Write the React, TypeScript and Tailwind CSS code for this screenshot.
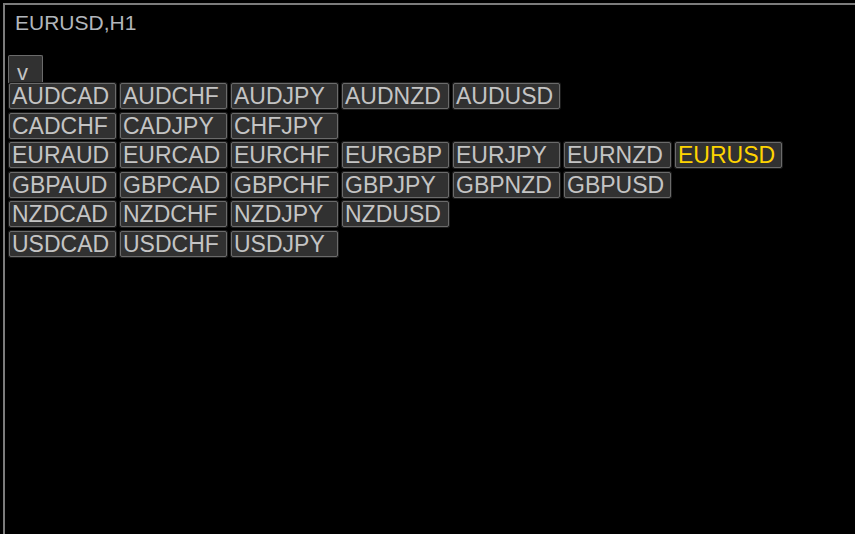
const rows: string[][] = [
  ['AUDCAD', 'AUDCHF', 'AUDJPY', 'AUDNZD', 'AUDUSD'],
  ['CADCHF', 'CADJPY', 'CHFJPY'],
  ['EURAUD', 'EURCAD', 'EURCHF', 'EURGBP', 'EURJPY', 'EURNZD', 'EURUSD'],
  ['GBPAUD', 'GBPCAD', 'GBPCHF', 'GBPJPY', 'GBPNZD', 'GBPUSD'],
  ['NZDCAD', 'NZDCHF', 'NZDJPY', 'NZDUSD'],
  ['USDCAD', 'USDCHF', 'USDJPY'],
];

const current = 'EURUSD';

function SymbolButton({ name }: { name: string }) {
  const active = name === current;
  return (
    <div
      className={`flex h-[26px] w-[107px] items-center rounded-[2px] border border-[#6b6b6b] bg-[#313131] pl-[2px] pt-[1px] text-[23px] leading-none shadow-[0_0_0_1px_#1c1c1c] ${
        active ? 'text-[#ffd400]' : 'text-[#c4c4c4]'
      }`}
    >
      {name}
    </div>
  );
}

export default function App() {
  return (
    <div
      className="h-[534px] w-[855px] overflow-hidden bg-black pl-[3px] pt-[3px]"
      style={{ fontFamily: '"Liberation Sans", Arial, sans-serif' }}
    >
      <div className="h-full border-l-2 border-t-2 border-[#7c7c7c]">
        <div className="pl-[10px] pt-[7px] text-[21px] leading-none text-[#b2b6bc]">EURUSD,H1</div>

        <div className="ml-[3px] mt-[22px] flex h-[28px] w-[35px] items-end rounded-t-[2px] border border-b-0 border-[#6b6b6b] bg-[#313131] pl-[8px] text-[22px] leading-[20px] text-[#c4c4c4]">
          v
        </div>

        <div className="ml-[4px] flex flex-col gap-y-[3.5px]">
          {rows.map((row, i) => (
            <div key={i} className="flex gap-x-[4px]">
              {row.map((s) => (
                <SymbolButton key={s} name={s} />
              ))}
            </div>
          ))}
        </div>
      </div>
    </div>
  );
}
